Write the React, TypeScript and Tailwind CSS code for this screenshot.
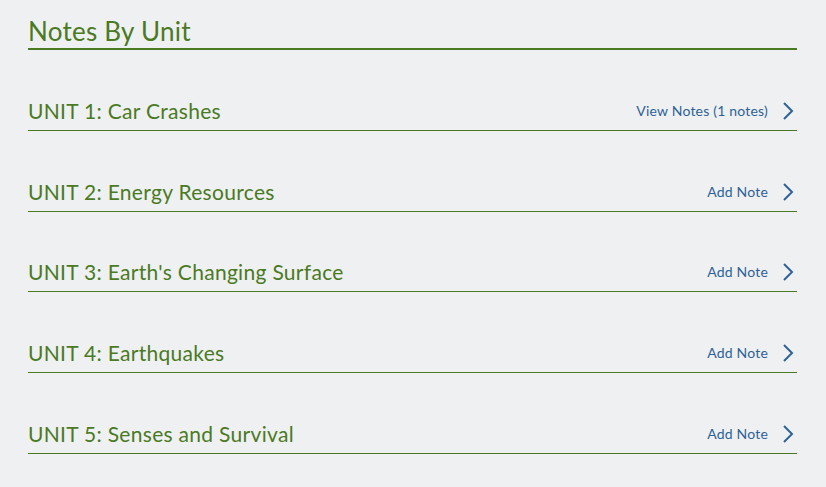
const units = [
  { title: 'UNIT 1: Car Crashes', action: 'View Notes (1 notes)', h: 'h-[81px]' },
  { title: 'UNIT 2: Energy Resources', action: 'Add Note', h: 'h-[81px]' },
  { title: "UNIT 3: Earth's Changing Surface", action: 'Add Note', h: 'h-[80px]' },
  { title: 'UNIT 4: Earthquakes', action: 'Add Note', h: 'h-[81px]' },
  { title: 'UNIT 5: Senses and Survival', action: 'Add Note', h: 'h-[81px]' },
];

function Chevron() {
  return (
    <svg width="12" height="20" viewBox="0 0 12 20" className="block">
      <path d="M2 2 L10 10 L2 18" fill="none" stroke="#2d6296" strokeWidth="2" />
    </svg>
  );
}

export default function App() {
  return (
    <div className="w-[826px] h-[487px] bg-[#eff0f2] overflow-hidden" style={{ fontFamily: 'Lato, "Open Sans", sans-serif' }}>
      <div className="pl-[28px] pr-[29px] pt-[16px]">
        {/* Heading */}
        <div className="border-b-2 border-[#4a7a22] pb-[1px]">
          <h1 className="text-[26px] leading-[31px] tracking-[0.25px] text-[#4a7a22]">Notes By Unit</h1>
        </div>

        {/* Unit rows */}
        {units.map((u) => (
          <div key={u.title} className={`${u.h} flex items-end justify-between border-b border-[#4a7a22] pb-[7px]`}>
            <span className="text-[21px] leading-[24px] tracking-[0.3px] text-[#4a7a22]">{u.title}</span>
            <div className="flex items-center gap-[14px] pr-[3px] pb-[2px]">
              <span className="text-[14px] tracking-[0.2px] text-[#2d6296]">{u.action}</span>
              <Chevron />
            </div>
          </div>
        ))}
      </div>
    </div>
  );
}
